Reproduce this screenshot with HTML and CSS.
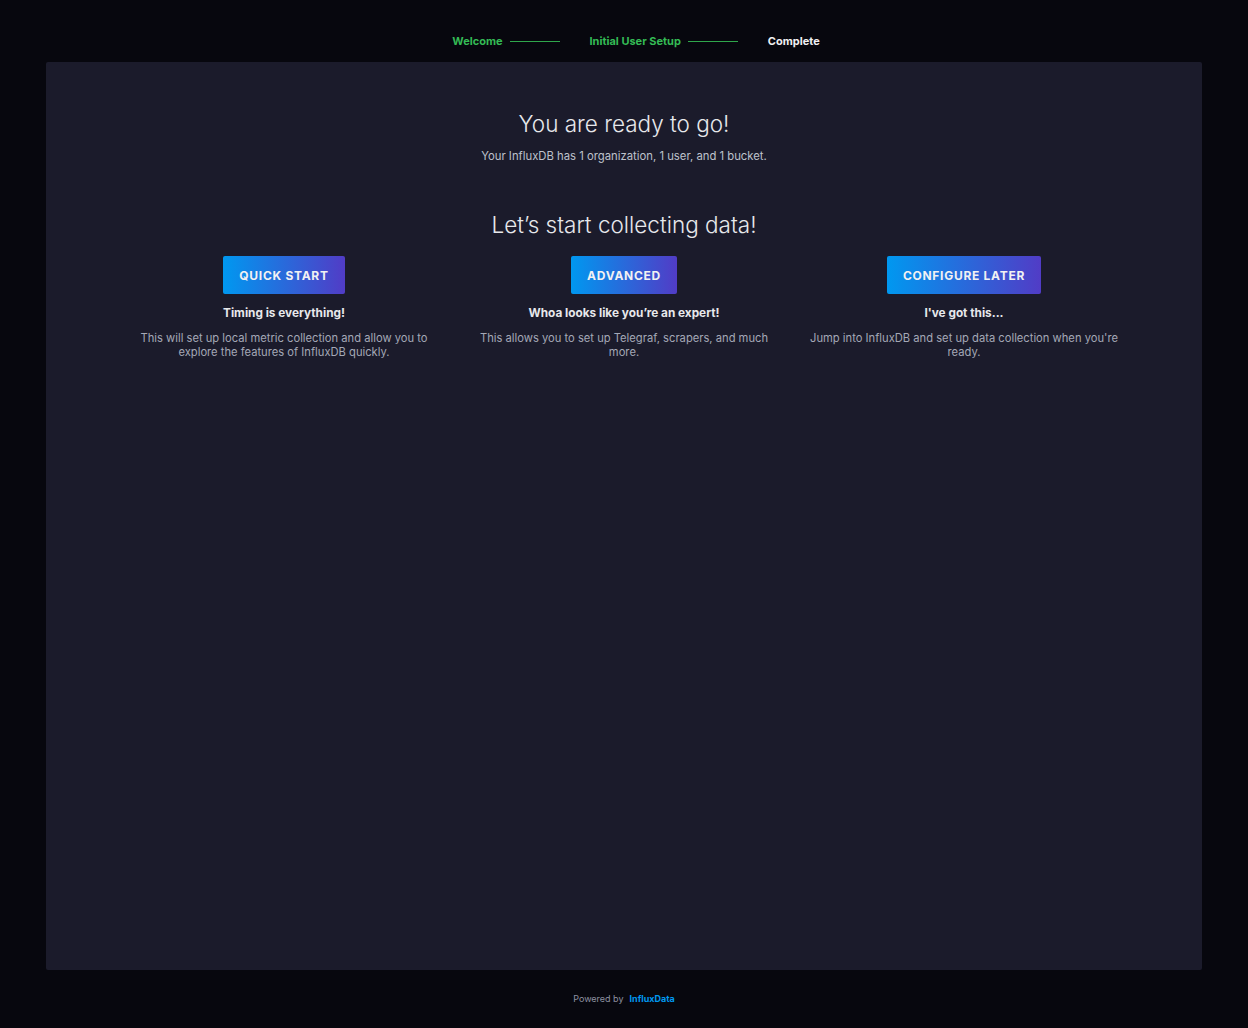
FILE: index.html
```html
<!DOCTYPE html>
<html>
<head>
    <meta charset="UTF-8">
    <title>InfluxDB - Setup Complete</title>
    <link rel="stylesheet" href="styles.css">
</head>
<body>
    <div class="wizard">
        <div class="steps">
            <div class="step done">Welcome</div>
            <div class="step-line"></div>
            <div class="step done">Initial User Setup</div>
            <div class="step-line"></div>
            <div class="step current">Complete</div>
        </div>

        <div class="panel">
            <h2 class="title">You are ready to go!</h2>
            <p class="summary">Your InfluxDB has 1 organization, 1 user, and 1 bucket.</p>

            <h2 class="title collect">Let’s start collecting data!</h2>

            <div class="options">
                <div class="option">
                    <button class="btn">Quick Start</button>
                    <h5>Timing is everything!</h5>
                    <p>This will set up local metric collection and allow you to explore the features of InfluxDB quickly.</p>
                </div>
                <div class="option">
                    <button class="btn">Advanced</button>
                    <h5>Whoa looks like you’re an expert!</h5>
                    <p>This allows you to set up Telegraf, scrapers, and much more.</p>
                </div>
                <div class="option">
                    <button class="btn">Configure Later</button>
                    <h5>I've got this...</h5>
                    <p>Jump into InfluxDB and set up data collection when you're ready.</p>
                </div>
            </div>
        </div>

        <div class="footer">
            Powered by <a href="#">InfluxData</a>
        </div>
    </div>
</body>
</html>
```

FILE: styles.css
```css
* {
    margin: 0;
    padding: 0;
    box-sizing: border-box;
}

body {
    font-family: 'Inter', 'Roboto', 'Liberation Sans', sans-serif;
    background: #07070e;
    color: #d4d4dc;
    height: 1028px;
    overflow: hidden;
}

.wizard {
    display: flex;
    flex-direction: column;
    height: 100%;
    padding: 0 46px;
}

.steps {
    height: 62px;
    display: flex;
    align-items: center;
    justify-content: center;
    padding-top: 20px;
    padding-left: 24px;
    font-size: 11px;
    font-weight: 700;
}

.step {
    color: #34bb55;
}

.step.current {
    color: #f1f1f3;
}

.step-line {
    width: 50px;
    height: 1px;
    background: #2fa64b;
    margin: 0 30px 0 7px;
}

.panel {
    height: 908px;
    background: #1b1b2b;
    border-radius: 2px;
    text-align: center;
    padding-top: 48px;
}

.title {
    font-size: 22.5px;
    font-weight: 300;
    color: #e7e8eb;
    line-height: 28px;
}

.summary {
    font-size: 11.3px;
    color: #bec2cc;
    margin-top: 11px;
}

.collect {
    margin-top: 48px;
}

.options {
    display: flex;
    justify-content: center;
    margin-top: 17px;
}

.option {
    width: 340px;
    display: flex;
    flex-direction: column;
    align-items: center;
}

.btn {
    height: 38px;
    padding: 0 16px;
    border: none;
    border-radius: 2px;
    background: linear-gradient(90deg, #0098f0 0%, #513cc6 100%);
    color: #f1f1f3;
    font-family: inherit;
    font-size: 12px;
    font-weight: 700;
    letter-spacing: 0.06em;
    text-transform: uppercase;
    cursor: pointer;
}

.option h5 {
    font-size: 11.8px;
    font-weight: 700;
    color: #e7e8eb;
    margin-top: 12px;
}

.option p {
    font-size: 11.2px;
    line-height: 14px;
    color: #a4a8b6;
    max-width: 316px;
    margin-top: 11px;
}

.footer {
    flex: 1;
    display: flex;
    align-items: center;
    justify-content: center;
    font-size: 9px;
    color: #8e91a1;
    padding-bottom: 2px;
}

.footer a {
    color: #0098f0;
    font-weight: 700;
    text-decoration: none;
    margin-left: 6px;
}
```
